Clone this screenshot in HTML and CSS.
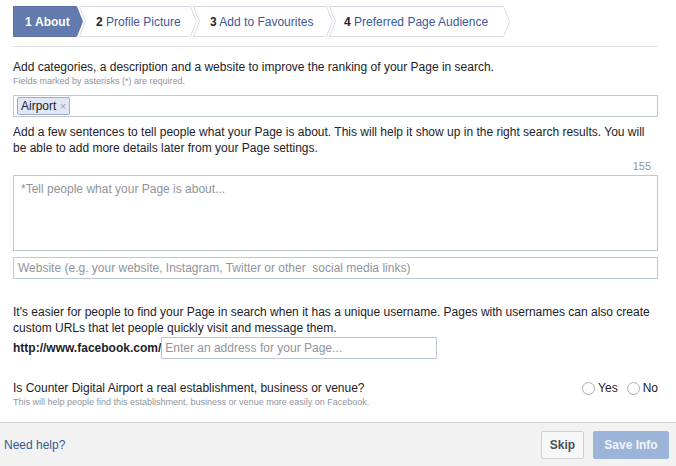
FILE: index.html
```html
<!DOCTYPE html>
<html>
<head>
<meta charset="utf-8">
<link rel="stylesheet" href="styles.css">
</head>
<body>
<div class="page">
  <div class="steps">
    <div class="step step1">
      <svg class="shape" width="70" height="31" viewBox="0 0 70 31"><polygon points="0.5,0.5 63.5,0.5 69.5,15.5 63.5,30.5 0.5,30.5" fill="#627aad" stroke="#5a72a6"/></svg>
      <span class="label"><b>1</b> <b>About</b></span>
    </div>
    <div class="step step2">
      <svg class="shape" width="118" height="31" viewBox="0 0 118 31"><polygon points="0.5,0.5 111.5,0.5 117.5,15.5 111.5,30.5 0.5,30.5 6.5,15.5" fill="#fff" stroke="#d6dbe6"/></svg>
      <span class="label"><b>2</b> Profile Picture</span>
    </div>
    <div class="step step3">
      <svg class="shape" width="140" height="31" viewBox="0 0 140 31"><polygon points="0.5,0.5 133.5,0.5 139.5,15.5 133.5,30.5 0.5,30.5 6.5,15.5" fill="#fff" stroke="#d6dbe6"/></svg>
      <span class="label"><b>3</b> Add to Favourites</span>
    </div>
    <div class="step step4">
      <svg class="shape" width="181" height="31" viewBox="0 0 181 31"><polygon points="0.5,0.5 174.5,0.5 180.5,15.5 174.5,30.5 0.5,30.5 6.5,15.5" fill="#fff" stroke="#d6dbe6"/></svg>
      <span class="label"><b>4</b> Preferred Page Audience</span>
    </div>
  </div>

  <div class="form">
    <p class="lead">Add categories, a description and a website to improve the ranking of your Page in search.</p>
    <p class="hint">Fields marked by asterisks (*) are required.</p>
    <div class="box tagbox"><span class="tag">Airport <span class="x">×</span></span></div>

    <p class="para p2">Add a few sentences to tell people what your Page is about. This will help it show up in the right search results. You will be able to add more details later from your Page settings.</p>
    <div class="count">155</div>
    <div class="box textarea"><span class="ph">*Tell people what your Page is about...</span></div>
    <div class="box website"><span class="ph">Website (e.g. your website, Instagram, Twitter or other&nbsp; social media links)</span></div>

    <p class="para p3">It's easier for people to find your Page in search when it has a unique username. Pages with usernames can also create custom URLs that let people quickly visit and message them.</p>
    <div class="urlrow">
      <span class="url">http://www.facebook.com/</span>
      <div class="box urlinput"><span class="ph">Enter an address for your Page...</span></div>
    </div>

    <div class="qrow">
      <span class="question">Is Counter Digital Airport a real establishment, business or venue?</span>
      <span class="radios">
        <span class="radio"></span><span class="rlabel">Yes</span>
        <span class="radio r2"></span><span class="rlabel">No</span>
      </span>
    </div>
    <p class="hint qhint">This will help people find this establishment, business or venue more easily on Facebook.</p>
  </div>
</div>

<div class="footer">
  <span class="help">Need help?</span>
  <span class="btn skip">Skip</span>
  <span class="btn save">Save Info</span>
</div>
</body>
</html>
```

FILE: styles.css
```css
html, body {
  margin: 0;
  padding: 0;
  background: #fff;
}
body {
  width: 676px;
  height: 466px;
  overflow: hidden;
  font-family: "Liberation Sans", Arial, Helvetica, sans-serif;
  font-size: 12px;
  color: #1d2129;
}
.page {
  padding: 6px 18px 0 13px;
}
.steps {
  display: flex;
  height: 31px;
}
.step {
  position: relative;
  height: 31px;
  display: flex;
  align-items: center;
  flex: none;
  color: #3b5998;
  font-size: 12px;
  white-space: nowrap;
}
.step b { color: #1d2129; }
.step + .step { margin-left: -4px; }
.shape {
  position: absolute;
  left: 0;
  top: 0;
}
.label {
  position: relative;
  padding-top: 1px;
}
.step1 { width: 70px; }
.step1 .label { padding-left: 12px; }
.step1 b { color: #fff; }
.step2 { width: 118px; }
.step2 .label { padding-left: 17px; }
.step3 { width: 140px; }
.step3 .label { padding-left: 17px; }
.step4 { width: 181px; }
.step4 .label { padding-left: 15px; }

.form {
  margin-top: 9px;
  border-top: 1px solid #dddfe2;
}
p { margin: 0; }
.lead {
  margin-top: 12px;
  line-height: 16px;
}
.hint {
  font-size: 9px;
  line-height: 12px;
  color: #90949c;
}
.box {
  box-sizing: border-box;
  border: 1px solid #bdc7d8;
  background: #fff;
}
.tagbox {
  margin-top: 8px;
  height: 22px;
  padding: 1px 0 0 3px;
}
.tag {
  display: inline-block;
  box-sizing: border-box;
  height: 18px;
  line-height: 16px;
  padding: 0 3px 0 3px;
  background: #e2e8f3;
  border: 1px solid #9dacce;
  border-radius: 2px;
  color: #1d2129;
  font-size: 12px;
}
.tag .x {
  color: #97a3bd;
  font-size: 11px;
}
.para {
  line-height: 16px;
}
.p2 { margin-top: 7px; }
.count {
  margin-top: 2px;
  line-height: 16px;
  text-align: right;
  padding-right: 7px;
  color: #90949c;
  font-size: 11px;
}
.ph { color: #90949c; }
.textarea {
  margin-top: 1px;
  height: 76px;
  padding: 6px 7px;
}
.website {
  margin-top: 6px;
  height: 22px;
  line-height: 20px;
  padding: 0 4px;
}
.p3 { margin-top: 25px; }
.urlrow {
  margin-top: 1px;
  display: flex;
  align-items: center;
}
.url {
  font-weight: bold;
  color: #1d2129;
}
.urlinput {
  margin-left: 0;
  width: 276px;
  height: 22px;
  line-height: 20px;
  padding: 0 3px;
}
.qrow {
  margin-top: 21px;
  display: flex;
  justify-content: space-between;
  align-items: center;
  line-height: 16px;
}
.radios {
  display: flex;
  align-items: center;
}
.radio {
  box-sizing: border-box;
  width: 13px;
  height: 13px;
  border: 1px solid #a8adb6;
  border-radius: 50%;
  background: #fff;
  margin-right: 3px;
}
.r2 { margin-left: 9px; }
.rlabel { color: #1d2129; }
.qhint { line-height: 12px; }

.footer {
  margin-top: 14px;
  height: 44px;
  box-sizing: border-box;
  border-top: 1px solid #d3d4d6;
  background: #f2f2f2;
  display: flex;
  align-items: center;
  padding: 0 7px 0 4px;
}
.help {
  color: #365899;
  flex: 1;
}
.btn {
  box-sizing: border-box;
  height: 28px;
  line-height: 26px;
  border-radius: 2px;
  font-weight: bold;
  text-align: center;
}
.skip {
  width: 43px;
  background: #f6f7f9;
  border: 1px solid #ced0d4;
  color: #4b4f56;
  margin-right: 9px;
}
.save {
  width: 76px;
  background: #9cb4d8;
  border: 1px solid #9cb4d8;
  color: #f2f5fa;
}
```
